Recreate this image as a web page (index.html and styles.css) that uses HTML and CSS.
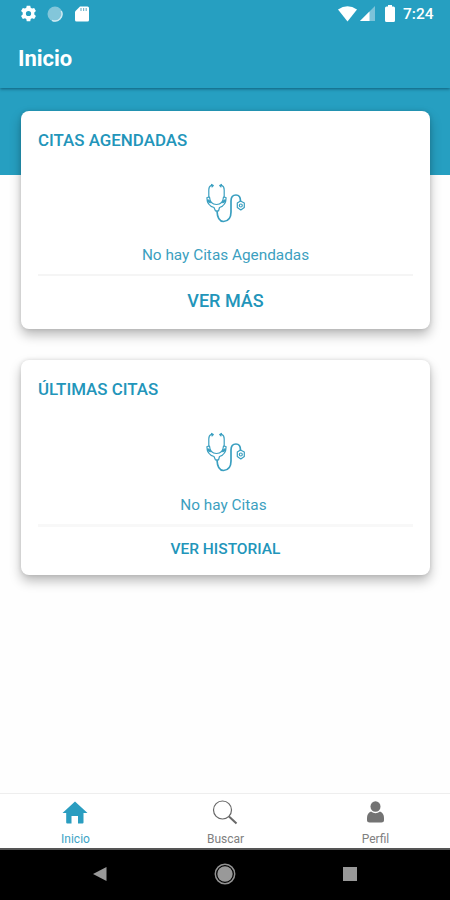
FILE: index.html
```html
<!DOCTYPE html>
<html lang="es">
<head>
<meta charset="utf-8">
<title>Inicio</title>
<link rel="stylesheet" href="styles.css">
</head>
<body>
<svg class="defs" width="0" height="0">
  <symbol id="stethoscope" viewBox="0 0 40 42">
    <g fill="none" stroke="#3a9fc0" stroke-width="1.2" stroke-linecap="round" stroke-linejoin="round">
      <path d="M6.500 2.500H5Q2.800 3.500 2.800 7V14M14.500 2.500H16Q18.200 3.500 18.200 7V14"/>
      <path d="M5.600 1.600L7.200 2.600L6 3.800M15.400 1.600L13.800 2.600L15 3.800" stroke-width="1.400"/>
      <path d="M1 14.500L3.500 14Q4 21.500 10.500 21.500T17.500 14L20 14.500Q20.500 22 13.500 24.500L12.500 28H9.500L8 24.500Q.5 22 1 14.500Z"/>
      <path d="M2 17.500L4 19M19 17.500L17 19" stroke-width="2.200"/>
      <path d="M11 28Q11.500 38.500 17.500 38.500Q25 38 25 29V18Q25 12 30 12Q34.500 12 34.500 18" stroke-width="1.700"/>
      <path d="M31.300 20L34.500 18L38.300 20V24.500L34.800 27L31.300 24.500Z"/>
      <circle cx="34.800" cy="22.500" r="1.500"/>
    </g>
  </symbol>
</svg>
<div class="screen">
  <header class="top">
    <div class="status">
      <svg width="17" height="17" viewBox="0 0 24 24" fill="#fff"><path fill-rule="evenodd" d="M9.500 1h5l.6 3 1.900 1.100 3-1 2.500 4.300-2.300 2.100v2.900l2.300 2.100-2.500 4.300-3-1-1.900 1.100-.6 3h-5l-.6-3L7 18.800l-3 1-2.500-4.300 2.300-2.100v-2.900L1.500 8.400 4 4.100l3 1L8.900 4zM12 8.300a3.700 3.700 0 1 0 0 7.400 3.700 3.700 0 0 0 0-7.400z"/></svg>
      <svg class="sync" width="16" height="16" viewBox="0 0 16 16"><circle cx="8" cy="8" r="7.500" fill="#83c6da"/><path d="M14.300 5A7 7 0 0 1 5 14.300" fill="none" stroke="#d0ebf3" stroke-width="1.400"/></svg>
      <svg class="sd" width="14" height="16" viewBox="0 0 14 16"><path d="M5 .5h7.500Q14 .5 14 2v12q0 1.500-1.500 1.500h-11Q0 15.500 0 14V5.500z" fill="#fff"/><path d="M6 2v3M8.600 2v3M11.200 2v3" stroke="#79b7cc" stroke-width="1.200"/></svg>
      <span class="space"></span>
      <svg width="19" height="16" viewBox="0 0 19 16"><path d="M0 3.500Q9.500-3.200 19 3.500L9.500 15.500z" fill="#fff"/></svg>
      <svg class="signal" width="15" height="15" viewBox="0 0 15 15"><path d="M15 0v15H0z" fill="#7cc3d9"/><path d="M9.500 5.500V15H0z" fill="#fff"/></svg>
      <svg class="battery" width="10" height="17" viewBox="0 0 10 17"><path d="M3 0h4v1.500h1.500Q10 1.500 10 3v12.500Q10 17 8.500 17h-7Q0 17 0 15.500V3q0-1.500 1.500-1.500H3z" fill="#fff"/></svg>
      <span class="clock">7:24</span>
    </div>
    <h1>Inicio</h1>
  </header>
  <main>
    <section class="card">
      <h2>CITAS AGENDADAS</h2>
      <svg class="steth" width="40" height="42"><use href="#stethoscope"/></svg>
      <p>No hay Citas Agendadas</p>
      <a class="more">VER MÁS</a>
    </section>
    <section class="card second">
      <h2>ÚLTIMAS CITAS</h2>
      <svg class="steth" width="40" height="42"><use href="#stethoscope"/></svg>
      <p>No hay Citas</p>
      <a class="more">VER HISTORIAL</a>
    </section>
  </main>
  <nav class="tabs">
    <div class="tab active">
      <svg width="26" height="26" viewBox="0 0 26 26"><path d="M13 1.500L.5 13h3.700v9.500q0 1 1 1h4.300V16h6.500v7.500h4.500q1 0 1-1V13h4z" fill="#2a9dc0"/></svg>
      <span>Inicio</span>
    </div>
    <div class="tab">
      <svg width="26" height="26" viewBox="0 0 26 26" fill="none" stroke="#686868"><circle cx="10.500" cy="10" r="9" stroke-width="1.200"/><path d="M17 16.500l7.500 7" stroke-width="2"/></svg>
      <span>Buscar</span>
    </div>
    <div class="tab">
      <svg width="26" height="26" viewBox="0 0 26 26" fill="#737373"><ellipse cx="13.500" cy="6.500" rx="5" ry="5.300"/><path d="M9 11.500q4.500 3.300 9 0Q22 13 22 18v2.500q0 2-2.500 2h-12q-2.500 0-2.500-2V18q0-5 4-6.500z"/></svg>
      <span>Perfil</span>
    </div>
  </nav>
  <footer class="system">
    <svg width="14" height="16" viewBox="0 0 14 16"><path d="M13.500 1v14L0 8z" fill="#999"/></svg>
    <svg width="22" height="22" viewBox="0 0 22 22"><circle cx="11" cy="11" r="9.700" fill="none" stroke="#919191" stroke-width="1.500"/><circle cx="11" cy="11" r="7.700" fill="#999"/></svg>
    <svg width="14" height="14" viewBox="0 0 14 14"><path d="M0 0h14v14H0z" fill="#999"/></svg>
  </footer>
</div>
</body>
</html>
```
FILE: styles.css
```css
* { box-sizing: border-box; }
body { margin: 0; background: #fefefe; font-family: Roboto, sans-serif; }
svg { display: block; flex: none; }
.defs { position: absolute; }
h1, h2, p { margin: 0; }
.screen { display: flex; flex-direction: column; width: 450px; height: 900px; overflow: hidden; }
.top { height: 88px; flex: none; background: #269fc1; color: #fff; box-shadow: 0 1px 3px rgba(0,50,70,.6); z-index: 1; }
.status { display: flex; align-items: center; height: 27px; padding: 0 17px 0 20px; }
.sync { margin-left: 10px; }
.sd { margin-left: 12px; }
.space { flex: 1; }
.signal { margin-left: 3px; }
.battery { margin-left: 10px; }
.clock { width: 30px; margin-left: 8px; font-size: 15.500px; font-weight: 500; line-height: 28px; white-space: nowrap; }
h1 { padding-left: 18px; font-size: 22px; font-weight: 700; line-height: 64px; }
main { flex: 1; padding: 23px 20px 0 21px; background: linear-gradient(#269fc1 87px, #fefefe 87px); }
.card { display: flex; flex-direction: column; align-items: center; height: 218px; padding: 17px 17px 0; border-radius: 8px; background: #fff; color: #2295ba; box-shadow: 0 6px 12px rgba(0,0,0,.27), 0 0 4px rgba(0,0,0,.12); }
h2 { align-self: flex-start; font-size: 16.900px; font-weight: 500; line-height: 24px; white-space: nowrap; }
.steth { margin-top: 31px; }
.card p { margin-top: 19px; font-size: 15.350px; line-height: 22px; color: #3c9fc0; white-space: nowrap; }
.more { width: 100%; margin-top: 8px; padding-top: 12px; border-top: 2px solid #f5f5f5; text-align: center; font-size: 18px; font-weight: 500; line-height: 25px; }
.second { height: 215px; margin-top: 31px; }
.card.second p { margin-top: 20px; padding-right: 4px; }
.second .more { padding-top: 11px; border-top-width: 3px; border-color: #f8f8f8; font-size: 15.500px; line-height: 22px; }
.tabs { display: flex; height: 55px; flex: none; border-top: 1px solid #eee; background: #fff; }
.tab { flex: 1; display: flex; flex-direction: column; align-items: center; padding: 6px 0 0 1px; color: #808080; font-size: 12px; line-height: 16px; }
.tab svg { margin-right: 2px; }
.tab span { margin-top: 5px; }
.active { color: #3da3c5; }
.system { display: grid; grid-template-columns: 1fr 22px 1fr; align-items: center; height: 52px; padding-bottom: 2px; flex: none; border-top: 2px solid #555; background: #000; }
.system svg:first-child { justify-self: end; margin-right: 107px; }
.system svg:last-child { margin-left: 107px; }
```
